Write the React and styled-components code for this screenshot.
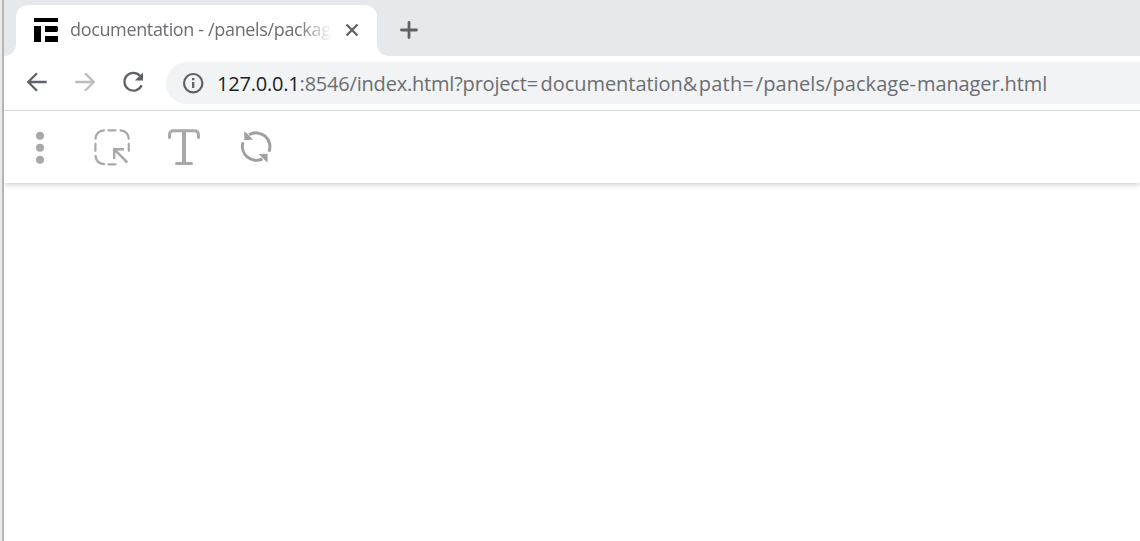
import React from "react";
import styled, { createGlobalStyle } from "styled-components";

const GlobalStyle = createGlobalStyle`
  * { box-sizing: border-box; }
  body { margin: 0; background: #fff; overflow: hidden; }
`;

const Window = styled.div`
  display: flex;
  width: 100%;
  height: 100vh;
  overflow: hidden;
  font-family: "Open Sans", "Noto Sans", sans-serif;
`;

const WindowEdge = styled.div`
  flex: 0 0 4px;
  background: #eaeaea;
  border-right: 2px solid #b6b6b6;
`;

const Browser = styled.div`
  flex: 1;
  min-width: 0;
  display: flex;
  flex-direction: column;
  overflow: hidden;
  background: #fff;
`;

const TabStrip = styled.div`
  flex: 0 0 56px;
  display: flex;
  align-items: flex-end;
  background: #e5e9ec;
`;

const Flare = styled.div`
  width: 12px;
  height: 12px;
  background: radial-gradient(
    circle at ${(p) => (p.$side === "left" ? "0 0" : "100% 0")},
    transparent 11.5px,
    #fff 12.5px
  );
`;

const Tab = styled.div`
  width: 361px;
  height: 51px;
  display: flex;
  align-items: center;
  padding: 0 0 1px 18px;
  background: #fff;
  border-radius: 12px 12px 0 0;
`;

const TabTitle = styled.div`
  width: 262px;
  margin: -2px 0 0 12px;
  overflow: hidden;
  white-space: nowrap;
  font-size: 18px;
  line-height: 30px;
  letter-spacing: -0.35px;
  color: #6b6e72;
  mask-image: linear-gradient(to right, #000 228px, transparent 262px);
`;

const CloseButton = styled.div`
  display: flex;
  margin: 0 0 0 13px;
`;

const NewTabButton = styled.div`
  display: flex;
  align-self: center;
  margin: 4px 0 0 11px;
`;

const NavBar = styled.div`
  flex: 0 0 55px;
  display: flex;
  align-items: center;
  padding-left: 21px;
  background: #fff;
  border-bottom: 1px solid #d9dadb;
`;

const NavButton = styled.div`
  flex: 0 0 24px;
  height: 24px;
  margin-top: -2px;
  margin-right: ${(p) => p.$gap || 24}px;
`;

const AddressBar = styled.div`
  flex: 1;
  min-width: 0;
  height: 42px;
  display: flex;
  align-items: center;
  padding-left: 16px;
  background: #f1f3f4;
  border-radius: 21px 0 0 21px;
`;

const Url = styled.div`
  margin: 2px 0 0 13px;
  white-space: nowrap;
  font-size: 20px;
  line-height: 40px;
  letter-spacing: -0.2px;
  color: #6b6e72;
`;

const Host = styled.span`
  color: #202124;
`;

const UrlPart = styled.span`
  letter-spacing: ${(p) => p.$spacing}px;
`;

const AppToolbar = styled.div`
  flex: 0 0 72px;
  display: flex;
  background: #fff;
  box-shadow: 0 1px 6px rgba(0, 0, 0, 0.24);
  clip-path: inset(0 0 -10px 0);
`;

const ToolButton = styled.div`
  width: 72px;
  height: 72px;
  display: flex;
`;

const Glyph = styled.svg`
  display: block;
  flex: none;
`;

const SiteLogo = () => (
  <Glyph width="24" height="24" viewBox="0 0 24 24" fill="#000">
    <path d="M0 0h24v4H0zM0 8h7v16H0zM11 8h12l1 1.5v3L23 14H11zM11 18h13v6H11z" />
  </Glyph>
);

export default function App() {
  return (
    <>
      <GlobalStyle />
      <Window>
        <WindowEdge />
        <Browser>
          <TabStrip>
            <Flare $side="left" />
            <Tab>
              <SiteLogo />
              <TabTitle>documentation - /panels/package</TabTitle>
              <CloseButton>
                <Glyph width="14" height="14" viewBox="0 0 14 14" stroke="#5f6368" strokeWidth="2.3">
                  <path d="M1.5 1.5l11 11M12.5 1.5l-11 11" />
                </Glyph>
              </CloseButton>
            </Tab>
            <Flare $side="right" />
            <NewTabButton>
              <Glyph width="18" height="18" viewBox="0 0 18 18" stroke="#5f6368" strokeWidth="2.8" strokeLinecap="round">
                <path d="M9 1.5v15M1.5 9h15" />
              </Glyph>
            </NewTabButton>
          </TabStrip>
          <NavBar>
            <NavButton>
              <Glyph width="24" height="24" viewBox="0 0 24 24" fill="none" stroke="#5f6368" strokeWidth="2.3">
                <path d="M21.7 12H3.5M12 3.2L3.2 12l8.8 8.8" />
              </Glyph>
            </NavButton>
            <NavButton>
              <Glyph width="24" height="24" viewBox="0 0 24 24" fill="none" stroke="#babcbe" strokeWidth="2.3">
                <path d="M2.3 12h18.2M12 3.2l8.8 8.8-8.8 8.8" />
              </Glyph>
            </NavButton>
            <NavButton $gap={21}>
              <Glyph width="24" height="24" viewBox="0 0 24 24">
                <path d="M19 5.8A8.9 8.9 0 1 0 20.6 15.2" fill="none" stroke="#5f6368" strokeWidth="2.3" />
                <path d="M22 2.4v8.2h-8.2z" fill="#5f6368" />
              </Glyph>
            </NavButton>
            <AddressBar>
              <Glyph width="22" height="22" viewBox="0 0 22 22" fill="none" stroke="#5f6368" strokeWidth="2.2">
                <circle cx="11.2" cy="11.2" r="9.2" />
                <path d="M11.2 10v6M11.2 6v2.3" strokeWidth="2.3" />
              </Glyph>
              <Url>
                <Host>127.0.0.1</Host>
                :8546/index.html?project
                <UrlPart $spacing={2.4}>=</UrlPart>
                <UrlPart $spacing={-0.04}>documentation</UrlPart>
                <UrlPart $spacing={1.4}>&amp;</UrlPart>
                <UrlPart $spacing={0.2}>path</UrlPart>
                <UrlPart $spacing={2}>=</UrlPart>
                <UrlPart $spacing={0.07}>/panels/package</UrlPart>
                <UrlPart $spacing={1}>-</UrlPart>
                <UrlPart $spacing={-0.12}>manager.html</UrlPart>
              </Url>
            </AddressBar>
          </NavBar>
          <AppToolbar>
            <ToolButton>
              <Glyph width="72" height="72" viewBox="0 0 72 72" fill="#a9a9a9">
                <circle cx="36" cy="24.8" r="4" />
                <circle cx="36" cy="36.8" r="4" />
                <circle cx="36" cy="48.8" r="4" />
              </Glyph>
            </ToolButton>
            <ToolButton>
              <Glyph width="72" height="72" viewBox="0 0 72 72" fill="none" stroke="#a9a9a9" strokeWidth="2.2" strokeLinecap="round">
                <path d="M19.5 27.6Q20.4 20 28 19.4M32.5 19.3h7M44.5 19.4Q52 20 52.7 27.6M52.8 32.8v7M19.4 32.8v7M19.5 45Q20.4 52.4 28 53.2M32.5 53.3h7" />
                <path d="M38.2 48V38.2H48M38.6 38.6L51.3 51.5" strokeWidth="2.5" strokeLinecap="butt" />
              </Glyph>
            </ToolButton>
            <ToolButton>
              <Glyph width="72" height="72" viewBox="0 0 72 72" fill="none" stroke="#a9a9a9" strokeWidth="3" strokeLinecap="round" strokeLinejoin="round">
                <path d="M21.5 26.5V24Q21.5 19.8 25.8 19.8H46.2Q50.5 19.8 50.5 24V26.5M28.5 52.4h15" />
                <path d="M36 20v32" strokeWidth="4" strokeLinecap="butt" />
              </Glyph>
            </ToolButton>
            <ToolButton>
              <Glyph width="72" height="72" viewBox="0 0 72 72" fill="none" stroke="#9f9f9f" strokeWidth="3">
                <path d="M29.2 23.7A13.8 13.8 0 0 1 48.9 40.8M42.4 47.8A13.8 13.8 0 0 1 23.1 31.2" />
                <path d="M24.3 20.2l2.2 1.8 6.5 6.8-8.7.2zM47.6 51.5l-2.2-1.8-6.5-6.8 8.7-.2z" fill="#9f9f9f" stroke="none" />
              </Glyph>
            </ToolButton>
          </AppToolbar>
        </Browser>
      </Window>
    </>
  );
}
